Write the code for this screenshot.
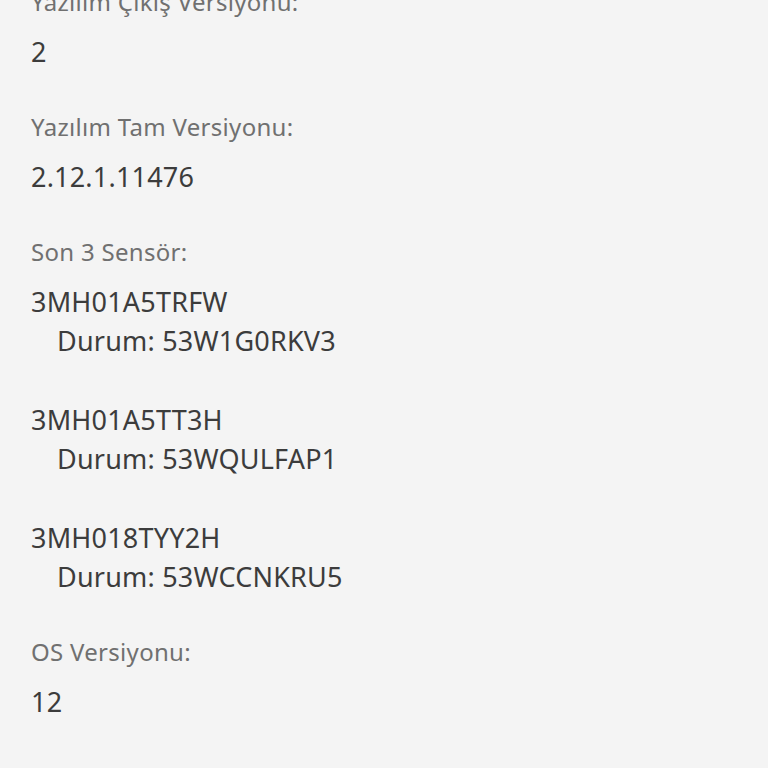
const sensors = [
  { id: '3MH01A5TRFW', durum: '53W1G0RKV3' },
  { id: '3MH01A5TT3H', durum: '53WQULFAP1' },
  { id: '3MH018TYY2H', durum: '53WCCNKRU5' },
];

function Label({ children }: { children: React.ReactNode }) {
  return <div className="text-[24px] leading-[32px] tracking-[0.3px] text-[#707070] mb-[14px]">{children}</div>;
}

function Value({ children }: { children: React.ReactNode }) {
  return <div className="text-[27px] leading-[39px] tracking-[0.2px] text-[#3c3c3c] mb-[40px]">{children}</div>;
}

export default function App() {
  return (
    <div className="w-[768px] h-[768px] overflow-hidden bg-[#f4f4f4]" style={{ fontFamily: "'Noto Sans', sans-serif" }}>
      <div className="-mt-[14px] pl-[31px]">
        <Label>Yazılım Çıkış Versiyonu:</Label>
        <Value>2</Value>

        <Label>Yazılım Tam Versiyonu:</Label>
        <Value>2.12.1.11476</Value>

        <Label>Son 3 Sensör:</Label>
        <div className="text-[27px] leading-[39.3px] tracking-[0.2px] text-[#3c3c3c] mb-[40px]">
          {sensors.map((s, i) => (
            <div key={s.id} className={i > 0 ? 'mt-[39.3px]' : ''}>
              <div>{s.id}</div>
              <div className="pl-[26px]">Durum: {s.durum}</div>
            </div>
          ))}
        </div>

        <Label>OS Versiyonu:</Label>
        <Value>12</Value>

        <Label>Akıllı Telefon Modeli:</Label>
        <Value>SM-A525F</Value>
      </div>
    </div>
  );
}
